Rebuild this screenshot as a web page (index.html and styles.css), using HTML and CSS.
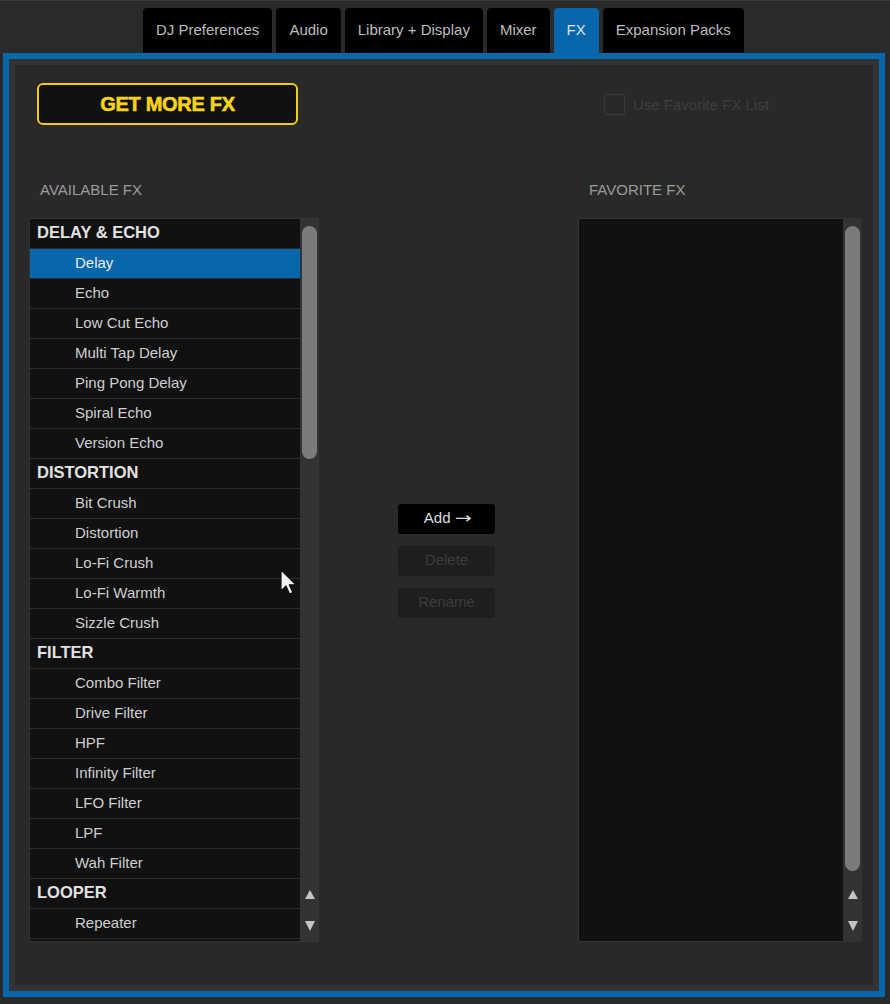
FILE: index.html
```html
<!DOCTYPE html>
<html lang="en">
<head>
<meta charset="utf-8">
<title>Preferences - FX</title>
<link rel="stylesheet" href="styles.css">
</head>
<body>
<header class="tabs-bar">
  <div class="tab">DJ Preferences</div>
  <div class="tab">Audio</div>
  <div class="tab">Library + Display</div>
  <div class="tab">Mixer</div>
  <div class="tab active">FX</div>
  <div class="tab">Expansion Packs</div>
</header>

<main class="panel">
  <div class="panel-inner">
    <div class="top-row">
      <button class="get-more">GET MORE FX</button>
      <label class="fav-toggle"><span class="checkbox"></span>Use Favorite FX List</label>
    </div>

    <div class="columns">
      <section class="col col-available">
        <div class="col-label">AVAILABLE FX</div>
        <div class="list-box">
          <ul class="list list-left">
            <li class="row group">DELAY &amp; ECHO</li>
            <li class="row selected">Delay</li>
            <li class="row">Echo</li>
            <li class="row">Low Cut Echo</li>
            <li class="row">Multi Tap Delay</li>
            <li class="row">Ping Pong Delay</li>
            <li class="row">Spiral Echo</li>
            <li class="row">Version Echo</li>
            <li class="row group">DISTORTION</li>
            <li class="row">Bit Crush</li>
            <li class="row">Distortion</li>
            <li class="row">Lo-Fi Crush</li>
            <li class="row">Lo-Fi Warmth</li>
            <li class="row">Sizzle Crush</li>
            <li class="row group">FILTER</li>
            <li class="row">Combo Filter</li>
            <li class="row">Drive Filter</li>
            <li class="row">HPF</li>
            <li class="row">Infinity Filter</li>
            <li class="row">LFO Filter</li>
            <li class="row">LPF</li>
            <li class="row">Wah Filter</li>
            <li class="row group">LOOPER</li>
            <li class="row">Repeater</li>
            <li class="row"></li>
          </ul>
          <div class="track">
            <div class="thumb thumb-left"></div>
            <svg class="arrow arrow-up" width="10" height="9" viewBox="0 0 10 9"><polygon points="5,0 10,9 0,9" fill="#c4c4c4"/></svg>
            <svg class="arrow arrow-down" width="10" height="10" viewBox="0 0 10 10"><polygon points="0,0 10,0 5,10" fill="#c4c4c4"/></svg>
          </div>
        </div>
      </section>

      <div class="actions">
        <button class="btn">Add <span class="arrow-glyph">→</span></button>
        <button class="btn disabled">Delete</button>
        <button class="btn disabled">Rename</button>
      </div>

      <section class="col col-fav">
        <div class="col-label">FAVORITE FX</div>
        <div class="list-box">
          <ul class="list list-right"></ul>
          <div class="track">
            <div class="thumb thumb-right"></div>
            <svg class="arrow arrow-up" width="10" height="9" viewBox="0 0 10 9"><polygon points="5,0 10,9 0,9" fill="#c4c4c4"/></svg>
            <svg class="arrow arrow-down" width="10" height="10" viewBox="0 0 10 10"><polygon points="0,0 10,0 5,10" fill="#c4c4c4"/></svg>
          </div>
        </div>
      </section>
    </div>
  </div>
</main>

<svg class="cursor" width="18" height="27" viewBox="0 0 18 27">
  <path d="M1,1 L1,22 L6,17 L9.5,25 L12.8,23.6 L9.3,15.8 L16,15.8 Z" fill="#f2f2f2" stroke="#111" stroke-width="1.2" stroke-linejoin="round"/>
</svg>
</body>
</html>
```

FILE: styles.css
```css
body {
  margin: 0;
  width: 890px;
  height: 1004px;
  overflow: hidden;
  position: relative;
  background: #2a2a2a;
  font-family: "Liberation Sans", Arial, sans-serif;
}

.tabs-bar {
  height: 53px;
  box-sizing: border-box;
  border-top: 1px solid #3a3a3a;
  display: flex;
  justify-content: flex-start;
  align-items: flex-end;
  gap: 4px;
  padding-left: 143px;
}

.tab {
  height: 45px;
  box-sizing: border-box;
  padding: 0 13px 2px;
  display: flex;
  align-items: center;
  background: #000;
  color: #bdbdbd;
  font-size: 15px;
  border-radius: 4px 4px 0 0;
}

.tab.active {
  background: #0667aa;
  color: #e2e2e2;
}

.panel {
  display: block;
  margin-left: 3px;
  width: 882px;
  height: 944px;
  box-sizing: border-box;
  border: 6px solid #0667aa;
}

.panel-inner {
  height: 100%;
  box-sizing: border-box;
  border: 6px solid #333333;
  background: #292929;
  padding: 18px 11px 0 14px;
}

.top-row {
  display: flex;
  align-items: center;
  height: 42px;
}

.get-more {
  margin-left: 8px;
  width: 261px;
  height: 42px;
  box-sizing: border-box;
  border: 2px solid #f2cd10;
  border-radius: 6px;
  background: #111;
  color: #f7d31a;
  font-family: "Liberation Sans", Arial, sans-serif;
  font-weight: bold;
  font-size: 20px;
  letter-spacing: -0.3px;
  -webkit-text-stroke: 0.6px #f7d31a;
  padding: 0;
}

.fav-toggle {
  margin-left: 306px;
  display: flex;
  align-items: center;
  gap: 8px;
  color: #3e3e3e;
  font-size: 15px;
}

.checkbox {
  width: 21px;
  height: 21px;
  box-sizing: border-box;
  border: 1px solid #3a3a3a;
  border-radius: 2px;
}

.columns {
  display: flex;
  margin-top: 56px;
}

.col-label {
  height: 18px;
  line-height: 17px;
  margin-bottom: 19px;
  padding-left: 11px;
  color: #9b9b9b;
  font-size: 15px;
}

.col-available {
  width: 290px;
}

.col-fav {
  width: 284px;
}

.actions {
  width: 259px;
  box-sizing: border-box;
  padding-top: 323px;
  padding-left: 79px;
  display: flex;
  flex-direction: column;
  align-items: flex-start;
  gap: 12px;
}

.btn {
  width: 97px;
  height: 30px;
  border: none;
  border-radius: 3px;
  background: #000;
  color: #dedede;
  font-family: "Liberation Sans", Arial, sans-serif;
  font-size: 15px;
  line-height: 28px;
  padding: 0 0 2px;
}

.arrow-glyph {
  display: inline-block;
  font-family: "DejaVu Sans", sans-serif;
  font-size: 15px;
  transform: scaleX(1.35);
  margin-left: 2px;
}

.btn.disabled {
  background: #1e1e1e;
  color: #3d3d3d;
}

.list-box {
  display: flex;
  height: 724px;
  box-sizing: border-box;
  background: #333333;
  padding: 1px 0 1px 1px;
}

.list {
  margin: 0;
  padding: 0;
  list-style: none;
  background: #111;
  overflow: hidden;
}

.list-left {
  width: 270px;
}

.list-right {
  width: 264px;
}

.row {
  height: 30px;
  box-sizing: border-box;
  border-bottom: 1px solid #2b2b2b;
  line-height: 27px;
  padding-left: 45px;
  font-size: 15px;
  color: #cfcfcf;
  white-space: nowrap;
}

.row.group {
  padding-left: 7px;
  font-weight: bold;
  font-size: 16.5px;
  color: #e2e2e2;
}

.row.selected {
  background: #0667aa;
  color: #ececec;
}

.track {
  flex: 1;
  display: flex;
  flex-direction: column;
  align-items: center;
  padding: 7px 0 10px;
}

.thumb {
  width: 15px;
  border-radius: 8px;
  background: #7b7b7b;
}

.thumb-left {
  height: 233px;
}

.thumb-right {
  height: 645px;
}

.arrow {
  display: block;
}

.arrow-up {
  margin-top: auto;
}

.arrow-down {
  margin-top: 22px;
}

.cursor {
  position: absolute;
  left: 280px;
  top: 569px;
}
```
